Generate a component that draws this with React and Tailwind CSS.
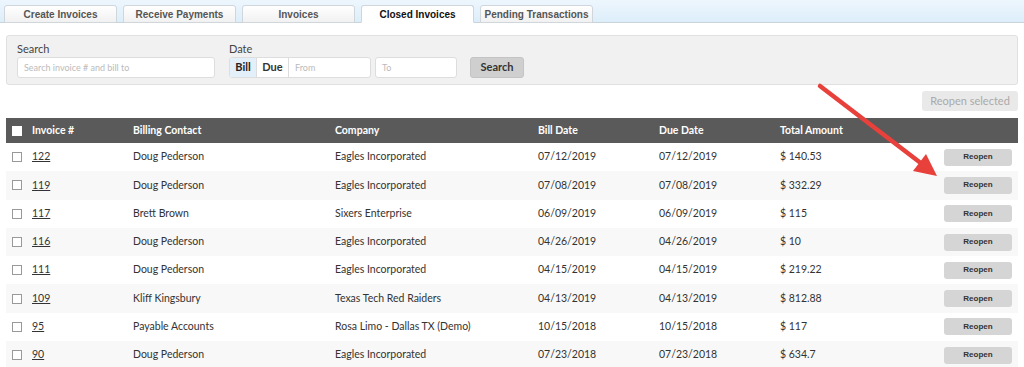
import React from "react";

const tabs = ["Create Invoices", "Receive Payments", "Invoices", "Closed Invoices", "Pending Transactions"];

const rows = [
  { id: "122", contact: "Doug Pederson", company: "Eagles Incorporated", bill: "07/12/2019", due: "07/12/2019", total: "$ 140.53" },
  { id: "119", contact: "Doug Pederson", company: "Eagles Incorporated", bill: "07/08/2019", due: "07/08/2019", total: "$ 332.29" },
  { id: "117", contact: "Brett Brown", company: "Sixers Enterprise", bill: "06/09/2019", due: "06/09/2019", total: "$ 115" },
  { id: "116", contact: "Doug Pederson", company: "Eagles Incorporated", bill: "04/26/2019", due: "04/26/2019", total: "$ 10" },
  { id: "111", contact: "Doug Pederson", company: "Eagles Incorporated", bill: "04/15/2019", due: "04/15/2019", total: "$ 219.22" },
  { id: "109", contact: "Kliff Kingsbury", company: "Texas Tech Red Raiders", bill: "04/13/2019", due: "04/13/2019", total: "$ 812.88" },
  { id: "95", contact: "Payable Accounts", company: "Rosa Limo - Dallas TX (Demo)", bill: "10/15/2018", due: "10/15/2018", total: "$ 117" },
  { id: "90", contact: "Doug Pederson", company: "Eagles Incorporated", bill: "07/23/2018", due: "07/23/2018", total: "$ 634.7" },
];

const ClosedInvoices = () => {
  return (
    <div className="relative w-[1024px] h-[367px] overflow-hidden bg-white font-['Lato','Open_Sans',sans-serif] text-[#333]">
      {/* Tabs */}
      <div className="h-[23px] flex items-end gap-[6px] pl-[4px] bg-gradient-to-b from-[#edf6fd] to-[#ddeefa] border-b border-[#c9d3da]">
        {tabs.map((tab) => {
          const active = tab === "Closed Invoices";
          return (
            <div
              key={tab}
              className={`w-[113px] h-[18px] -mb-px flex items-center justify-center rounded-t-[3px] border border-[#cfd6dc] font-['Liberation_Sans',Arial,sans-serif] font-bold text-[10px] ${
                active ? "bg-white border-b-white text-[#111]" : "bg-gradient-to-b from-white to-[#f1f1f1] text-[#555]"
              }`}
            >
              {tab}
            </div>
          );
        })}
      </div>

      {/* Search panel */}
      <div className="mx-[6px] mt-[12px] h-[50px] bg-[#f1f1f1] border border-[#e0e0e0] rounded-[3px] flex items-start gap-[14px] pl-[10px] pt-[6px]">
        <div className="flex flex-col">
          <span className="text-[11px] leading-[14px] text-[#444]">Search</span>
          <div className="mt-[1px] w-[198px] h-[21px] bg-white border border-[#ddd] rounded-[3px] flex items-center px-[6px] text-[9px] text-[#bbb]">
            Search invoice # and bill to
          </div>
        </div>
        <div className="flex flex-col">
          <span className="text-[11px] leading-[14px] text-[#444]">Date</span>
          <div className="mt-[1px] flex items-center gap-[4px]">
            <div className="flex h-[21px] bg-white border border-[#ddd] rounded-[3px] overflow-hidden">
              <div className="w-[27px] flex items-center justify-center bg-[#e4f0f9] border-r border-[#ddd] text-[11px] font-bold text-[#222]">Bill</div>
              <div className="w-[32px] flex items-center justify-center border-r border-[#ddd] text-[11px] font-bold text-[#333]">Due</div>
              <div className="w-[81px] flex items-center px-[6px] text-[9px] text-[#bbb]">From</div>
            </div>
            <div className="w-[82px] h-[21px] bg-white border border-[#ddd] rounded-[3px] flex items-center px-[6px] text-[9px] text-[#bbb]">To</div>
            <div className="ml-[9px] w-[54px] h-[21px] bg-[#cfcfcf] border border-[#c4c4c4] rounded-[3px] flex items-center justify-center text-[11px] font-bold text-[#333]">
              Search
            </div>
          </div>
        </div>
      </div>

      {/* Reopen selected */}
      <div className="flex justify-end pr-[6px] mt-[6px]">
        <div className="w-[96px] h-[20px] bg-[#e9e9e9] rounded-[3px] flex items-center justify-center text-[11px] text-[#aaa]">
          Reopen selected
        </div>
      </div>

      {/* Table */}
      <div className="mx-[6px] mt-[7px]">
        <div className="h-[25px] flex items-center bg-[#5a5a5a] text-white font-bold text-[10.5px]">
          <div className="w-[26px] pl-[6px]">
            <div className="w-[10px] h-[10px] bg-white"></div>
          </div>
          <div className="w-[101px]">Invoice #</div>
          <div className="w-[202px]">Billing Contact</div>
          <div className="w-[203px]">Company</div>
          <div className="w-[121px]">Bill Date</div>
          <div className="w-[121px]">Due Date</div>
          <div className="flex-1">Total Amount</div>
        </div>
        {rows.map((row, index) => (
          <div
            key={row.id}
            className={`h-[28.3px] flex items-center text-[10.5px] text-[#333] ${index % 2 === 1 ? "bg-[#f8f8f8]" : "bg-white"}`}
          >
            <div className="w-[26px] pl-[6px]">
              <div className="w-[10px] h-[10px] bg-white border border-[#999]"></div>
            </div>
            <div className="w-[101px]">
              <span className="underline">{row.id}</span>
            </div>
            <div className="w-[202px]">{row.contact}</div>
            <div className="w-[203px]">{row.company}</div>
            <div className="w-[121px]">{row.bill}</div>
            <div className="w-[121px]">{row.due}</div>
            <div className="flex-1">{row.total}</div>
            <div className="w-[68px] h-[17px] mr-[6px] bg-[#d5d5d5] rounded-[3px] flex items-center justify-center font-['Liberation_Sans',Arial,sans-serif] font-bold text-[8px] text-[#333]">
              Reopen
            </div>
          </div>
        ))}
      </div>

      {/* Red arrow annotation */}
      <svg className="absolute left-0 top-0 pointer-events-none" width="1024" height="367" viewBox="0 0 1024 367">
        <line x1="820" y1="86" x2="922" y2="164" stroke="#e8403b" strokeWidth="4.5" strokeLinecap="round" />
        <polygon points="937,176 913,171 926,154" fill="#e8403b" />
      </svg>
    </div>
  );
};

export default ClosedInvoices;
